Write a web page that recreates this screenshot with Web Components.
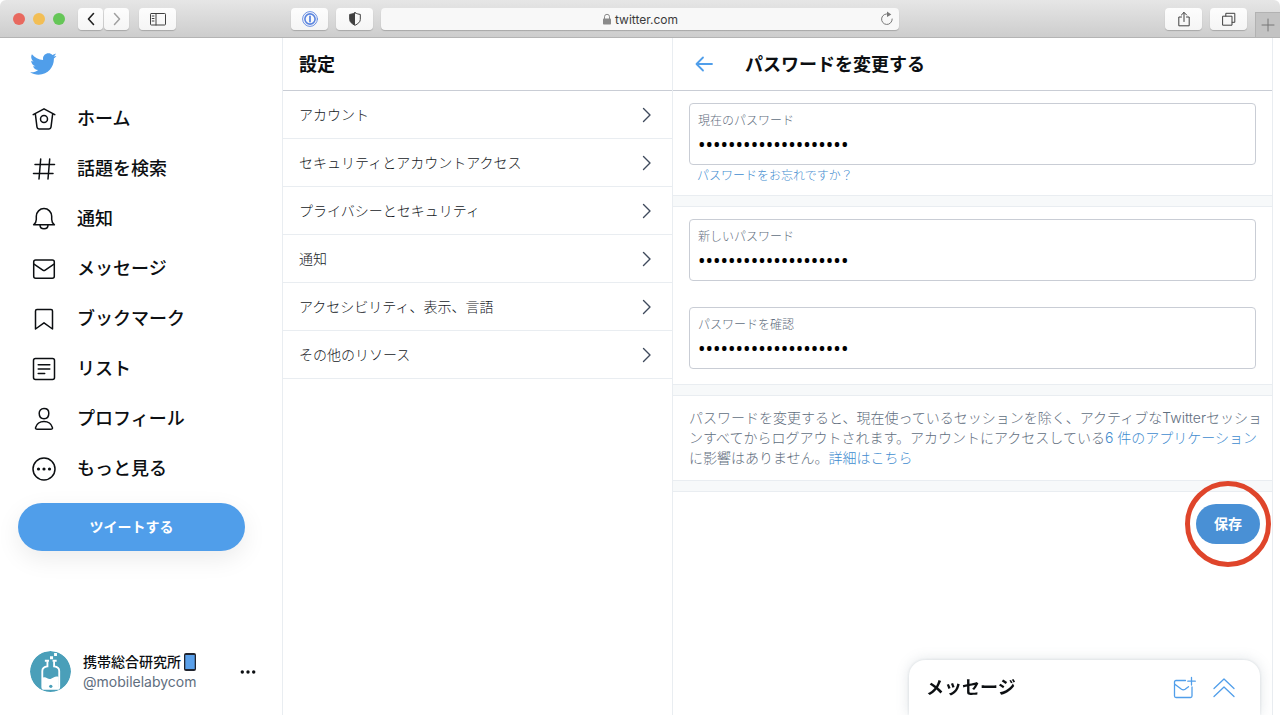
<!DOCTYPE html>
<html lang="ja">
<head>
<meta charset="utf-8">
<meta name="viewport" content="width=device-width, initial-scale=1">
<title>パスワードを変更する / Twitter</title>
<style>
  html, body { margin: 0; height: 100%; background: #fff; }
  body {
    --blue: #509eea;
    --link: #3f8ccf;
    --text: #0c0f12;
    --muted: #5f6e7e;
    --line: #e9edf1;
    --line-strong: #c9cdd5;
    color: var(--text);
    font: 14px/20px Inter, "Noto Sans CJK JP", sans-serif;
  }
</style>
</head>
<body>
<app-window>
  <browser-toolbar slot="toolbar">twitter.com</browser-toolbar>

  <side-bar slot="sidebar">
    <nav-item icon="home">ホーム</nav-item>
    <nav-item icon="hash">話題を検索</nav-item>
    <nav-item icon="bell">通知</nav-item>
    <nav-item icon="mail">メッセージ</nav-item>
    <nav-item icon="bookmark">ブックマーク</nav-item>
    <nav-item icon="list">リスト</nav-item>
    <nav-item icon="user">プロフィール</nav-item>
    <nav-item icon="more">もっと見る</nav-item>
    <pill-button slot="action" wide>ツイートする</pill-button>
    <account-chip slot="account">
      <span slot="name">携帯総合研究所</span>
      <span slot="handle">@mobilelabycom</span>
    </account-chip>
  </side-bar>

  <page-column slot="list">
    <span slot="title">設定</span>
    <settings-row>アカウント</settings-row>
    <settings-row>セキュリティとアカウントアクセス</settings-row>
    <settings-row>プライバシーとセキュリティ</settings-row>
    <settings-row>通知</settings-row>
    <settings-row>アクセシビリティ、表示、言語</settings-row>
    <settings-row>その他のリソース</settings-row>
  </page-column>

  <page-column slot="detail" back>
    <span slot="title">パスワードを変更する</span>
    <password-form></password-form>
  </page-column>

  <message-drawer slot="drawer">メッセージ</message-drawer>
</app-window>

<script>
const ICONS = {
  bird: ['0 0 24 24', '<path fill="currentColor" stroke="none" d="M23.643 4.937c-.835.37-1.732.62-2.675.733.962-.576 1.7-1.49 2.048-2.578-.9.534-1.897.922-2.958 1.13-.85-.904-2.06-1.47-3.4-1.47-2.572 0-4.658 2.086-4.658 4.66 0 .364.042.718.12 1.06-3.873-.195-7.304-2.05-9.602-4.868-.4.69-.63 1.49-.63 2.342 0 1.616.823 3.043 2.072 3.878-.764-.025-1.482-.234-2.11-.583v.06c0 2.257 1.605 4.14 3.737 4.568-.392.106-.803.162-1.227.162-.3 0-.593-.028-.877-.082.593 1.85 2.313 3.198 4.352 3.234-1.595 1.25-3.604 1.995-5.786 1.995-.376 0-.747-.022-1.112-.065 2.062 1.323 4.51 2.093 7.14 2.093 8.57 0 13.255-7.098 13.255-13.254 0-.2-.005-.402-.014-.602.91-.658 1.7-1.477 2.323-2.41z"/>'],
  home: ['0 0 24 24', '<path d="M1.2 7.6 12 1.8l10.800 5.800M3.300 6.700l1.700 13.500q.200 1.800 2 1.800h10q1.800 0 2-1.800l1.700-13.500"/><circle cx="12" cy="12" r="3.500"/>'],
  hash: ['0 0 24 24', '<path d="M8.700 2 7 22M17.700 2 16 22M3 7.500h19.500M1.500 16.500H21"/>'],
  bell: ['0 0 24 24', '<path d="M1.600 17.800c2-1.500 2.700-3 2.700-5.300V9.300a7.700 7.700 0 0 1 15.400 0v3.200c0 2.300.7 3.800 2.700 5.300zM8 18c0 5 8 5 8 0"/>'],
  mail: ['0 0 24 24', '<rect x="1.700" y="3" width="20.600" height="18.200" rx="2"/><path d="m2 7.200 8.800 5.900q1.200.8 2.400 0L22 7.200"/>'],
  bookmark: ['0 0 24 24', '<path d="M3.500 22V4q0-1.500 1.500-1.500h14q1.500 0 1.500 1.500v18L12 15.800z"/>'],
  list: ['0 0 24 24', '<rect x="1.500" y="1.500" width="21" height="21" rx="2"/><path d="M6.200 7.700h11.600M6.200 12h11.600M6.200 16.400h6.500"/>'],
  user: ['0 0 24 24', '<path d="M12 1.600c3.200 0 4.800 1.900 4.800 4.700 0 3.300-1.600 5.500-4.800 5.500s-4.800-2.200-4.800-5.500c0-2.800 1.600-4.700 4.800-4.700zM5.300 22.300q-2.200 0-1.700-1.800C4.800 16.600 7.900 14.500 12 14.500s7.200 2.100 8.400 6q.5 1.800-1.700 1.800z"/>'],
  more: ['0 0 24 24', '<circle cx="12" cy="12" r="11"/><g fill="currentColor" stroke="none"><circle cx="6.500" cy="12" r="1.600"/><circle cx="12" cy="12" r="1.600"/><circle cx="17.500" cy="12" r="1.600"/></g>'],
  dots: ['0 0 16 16', '<g fill="currentColor" stroke="none"><circle cx="2.300" cy="8" r="1.700"/><circle cx="8" cy="8" r="1.700"/><circle cx="13.700" cy="8" r="1.700"/></g>'],
  arrow: ['0 0 20 20', '<path d="M18 10H3M9 3.500 2.500 10 9 16.500"/>'],
  chevron: ['0 0 16 16', '<path d="m4.500 1.500 6.500 6.500-6.500 6.500"/>'],
  compose: ['0 0 24 24', '<path d="M13.500 4.500H4q-1.500 0-1.500 1.500v14q0 1.500 1.500 1.500h14.500q1.500 0 1.500-1.500V11M2.500 8l7 5.300q1.800 1.200 3.600 0l3.400-2.600M19.500 1.500v7.500M15.800 5.200h7.500"/>'],
  up: ['0 0 24 24', '<path d="m2 12.500 10-9.500 10 9.500M2 20.500l10-9.500L22 20.500"/>'],
  back: ['0 0 16 16', '<path d="M10.500 2.500 5.500 8l5 5.500"/>'],
  forward: ['0 0 16 16', '<path d="m5.500 2.500 5 5.500-5 5.500"/>'],
  panel: ['0 0 16 16', '<rect x=".5" y="2.500" width="15" height="11.500" rx=".8"/><path d="M6 2.500V14M2.200 5h1.800M2.200 7.500h1.800M2.200 10h1.800"/>'],
  onepass: ['0 0 16 16', '<circle cx="8" cy="8" r="7.400" stroke-width=".9"/><circle cx="8" cy="8" r="5.100" stroke-width="1.600"/><path stroke-width="1.800" d="M8 5.500v5"/>'],
  shield: ['0 0 16 16', '<path d="M8 1.800C10 2.800 11.500 3.200 13.300 3.400V8.500c0 2.500-2.300 4.300-5.300 5.800-3-1.500-5.300-3.300-5.300-5.800V3.400C4.500 3.200 6 2.800 8 1.800z"/><path fill="currentColor" stroke="none" d="M8 1.800v12.500c-3-1.500-5.300-3.300-5.300-5.800V3.400C4.500 3.200 6 2.800 8 1.800z"/>'],
  lock: ['0 0 12 12', '<path d="M3.500 6V3.800a2.500 2.500 0 0 1 5 0V6"/><rect x="2" y="5.500" width="8" height="6" rx=".8" fill="currentColor" stroke="none"/>'],
  reload: ['0 0 16 16', '<path d="M9.500 3.100A5.300 5.300 0 1 0 13.200 8"/><path fill="currentColor" stroke="none" d="M8 .5 12.300 3.400 8 6z"/>'],
  share: ['0 0 16 16', '<path d="M5.500 6H2.800v8.800h10.400V6h-2.700M8 10.500V1.500M5.400 4 8 1.400 10.600 4"/>'],
  tabs: ['0 0 16 16', '<rect x="2" y="5.200" width="9" height="9"/><path d="M4.800 5V2.300h9v9h-2.600"/>'],
  plus: ['0 0 14 14', '<path d="M7 1v12M1 7h12"/>']
};

const define = (name, html, setup) => {
  const template = document.createElement('template');
  template.innerHTML = html;
  customElements.define(name, class extends HTMLElement {
    constructor() {
      super();
      this.attachShadow({ mode: 'open' }).append(template.content.cloneNode(true));
    }
    connectedCallback() {
      if (setup) setup.call(this, this.shadowRoot);
    }
  });
};

define('ui-icon', `
  <style>
    :host { display: block; flex: none; width: var(--size, 24px); height: var(--size, 24px); }
    svg { display: block; width: 100%; height: 100%; overflow: visible; fill: none; stroke: currentColor;
          stroke-width: var(--stroke, 1.5); stroke-linecap: round; stroke-linejoin: round; }
  </style>
  <svg aria-hidden="true"></svg>`, function (root) {
  const [box, shapes] = ICONS[this.getAttribute('name')];
  const svg = root.querySelector('svg');
  svg.setAttribute('viewBox', box);
  svg.innerHTML = shapes;
});

define('app-window', `
  <style>
    :host { display: grid; grid-template-rows: auto minmax(0, 1fr); height: 100vh; overflow: hidden; }
    main { display: grid; grid-template-columns: 283fr 390fr 600fr; padding-right: 7px; min-height: 0; }
    ::slotted([slot="drawer"]) { position: fixed; right: 20px; bottom: 0; }
  </style>
  <slot name="toolbar"></slot>
  <main><slot name="sidebar"></slot><slot name="list"></slot><slot name="detail"></slot></main>
  <slot name="drawer"></slot>`);

define('browser-toolbar', `
  <style>
    :host { display: flex; align-items: center; height: 37px; border-bottom: 1px solid #b4b4b4;
            border-radius: 6px 6px 0 0; background: linear-gradient(#e6e6e6, #cdcdcd);
            font-size: 12px; line-height: 16px; color: #3c3c3c; overflow: hidden; }
    .left { display: flex; align-items: center; width: 291px; }
    .lights { display: flex; gap: 8px; margin: 0 13px; }
    .lights i { width: 12px; height: 12px; border-radius: 50%; }
    button { display: grid; place-items: center; box-sizing: border-box; width: 37px; height: 22px; padding: 0; border: 0;
             border-radius: 4px; background: linear-gradient(#fdfdfd, #f5f5f5); box-shadow: 0 1px 1px #0003; color: #404040;
             --size: 16px; --stroke: 1; }
    .history { display: flex; gap: 1px; margin-right: 10px; }
    .history button { width: 25px; }
    .middle { display: flex; flex: 1; gap: 8px; min-width: 0; }
    .address { flex: 1; display: flex; align-items: center; height: 22px; border-radius: 4px; background: #f8f8f8;
               box-shadow: 0 1px 1px #0003; padding: 0 4px; color: #777; --size: 16px; --stroke: 1; }
    .site { flex: 1; display: flex; justify-content: center; align-items: center; gap: 2px; padding-left: 15px; color: #8a8a8a; }
    .site span { color: #3c3c3c; padding-top: 2px; }
    .right { display: flex; justify-content: flex-end; width: 381px; gap: 8px; align-items: center; height: 100%; }
    .right .tab { align-self: flex-end; width: 25px; height: 25px; border-radius: 0; border: 1px solid #b2b2b2;
                  border-width: 1px 0 0 1px; background: #c3c3c3; box-shadow: none; color: #777; --size: 14px; }
  </style>
  <div class="left">
    <div class="lights"><i style="background:#e8695f"></i><i style="background:#f2be55"></i><i style="background:#65c657"></i></div>
    <div class="history">
      <button aria-label="戻る" style="--stroke:1.600;color:#222"><ui-icon name="back"></ui-icon></button>
      <button aria-label="進む" style="--stroke:1.500;color:#a0a0a0"><ui-icon name="forward"></ui-icon></button>
    </div>
    <button aria-label="サイドバー"><ui-icon name="panel"></ui-icon></button>
  </div>
  <div class="middle">
    <button aria-label="1Password" style="color:#5b85e0"><ui-icon name="onepass"></ui-icon></button>
    <button aria-label="プライバシーレポート"><ui-icon name="shield"></ui-icon></button>
    <div class="address">
      <div class="site"><ui-icon name="lock" style="--size:12px"></ui-icon><span><slot></slot></span></div>
      <ui-icon name="reload"></ui-icon>
    </div>
  </div>
  <div class="right">
    <button aria-label="共有"><ui-icon name="share"></ui-icon></button>
    <button aria-label="タブの概要"><ui-icon name="tabs"></ui-icon></button>
    <button class="tab" aria-label="新規タブ"><ui-icon name="plus"></ui-icon></button>
  </div>`);

define('side-bar', `
  <style>
    :host { display: flex; flex-direction: column; box-sizing: border-box; min-width: 0;
            border-right: 1px solid var(--line); }
    .logo { display: block; margin: 12px 0 0 29px; width: 28px; color: var(--blue); --size: 28px; }
    nav { display: flex; flex-direction: column; margin: 16px 0 9px; }
    .action { margin: 0 37px 0 18px; }
    .account { margin-top: auto; padding: 0 26px 23px 30px; }
  </style>
  <a class="logo" href="#" aria-label="Twitter"><ui-icon name="bird"></ui-icon></a>
  <nav><slot></slot></nav>
  <div class="action"><slot name="action"></slot></div>
  <div class="account"><slot name="account"></slot></div>`);

define('nav-item', `
  <style>
    :host { display: block; }
    a { display: flex; align-items: center; gap: 21px; height: 50px; padding-left: 32px; color: var(--text);
        text-decoration: none; font-size: 18px; line-height: 24px; font-weight: 500; white-space: nowrap; }
  </style>
  <a href="#"><slot></slot></a>`, function (root) {
  const icon = document.createElement('ui-icon');
  icon.setAttribute('name', this.getAttribute('icon'));
  root.querySelector('a').prepend(icon);
});

define('pill-button', `
  <style>
    :host { display: block; }
    button { display: block; height: 40px; padding: 0 18px; border: 0; border-radius: 24px; background: #4990d5;
             color: #fff; font: inherit; font-weight: 700; white-space: nowrap; }
    :host([wide]) button { width: 100%; height: 48px; background: var(--blue); box-shadow: 0 8px 24px #00000014; }
  </style>
  <button type="button"><slot></slot></button>`);

define('account-chip', `
  <style>
    :host { display: flex; align-items: center; gap: 12px; }
    .avatar { flex: none; width: 41px; height: 41px; border-radius: 50%; }
    .who { flex: 1; min-width: 0; white-space: nowrap; }
    .name { display: flex; align-items: center; gap: 3px; font-weight: 500; }
    .name svg { width: 12px; height: 18px; }
    .handle { color: var(--muted); }
    button { display: block; padding: 0; border: 0; background: none; color: var(--text); --size: 16px; }
  </style>
  <svg class="avatar" viewBox="0 0 40 40" role="img" aria-label="アイコン">
    <circle cx="20" cy="20" r="20" fill="#4a9fb9"/>
    <path d="M17 10v5q-5 .5-5 4.500V35q0 2 2 2h12.500q2 0 2-2V19.500q0-4-5-4.500v-5" fill="none" stroke="#fff" stroke-width="1.800"/>
    <path d="M14.500 9.500h4M22 9.500h4" stroke="#fff" stroke-width="2"/>
    <path d="M12.500 26c3-1.500 5 2 7.500 1.300s4.500-3.300 8-2V37H12.500z" fill="#fff"/>
    <circle cx="20.300" cy="34.500" r="1.600" fill="#4a9fb9"/>
    <path d="M19.500 5h3v3h-3zM23.500 2h2.800v2.800h-2.800z" fill="#fff"/>
  </svg>
  <div class="who">
    <div class="name"><slot name="name"></slot>
      <svg viewBox="0 0 12 18" role="img" aria-label="携帯電話"><rect width="12" height="18" rx="2" fill="#20242e"/><rect x="1.300" y="2" width="9.400" height="14" fill="#5aa0ea"/></svg>
    </div>
    <div class="handle"><slot name="handle"></slot></div>
  </div>
  <button aria-label="アカウントメニュー"><ui-icon name="dots"></ui-icon></button>`);

define('page-column', `
  <style>
    :host { display: block; box-sizing: border-box; min-width: 0; border-right: 1px solid var(--line); }
    header { display: flex; align-items: center; gap: 31px; height: 52px; padding-left: 16px;
             border-bottom: 1px solid var(--line-strong); }
    h2 { margin: 0; padding-top: 2px; font-size: 18px; line-height: 24px; font-weight: 700; white-space: nowrap; }
    a { color: var(--blue); --size: 20px; --stroke: 1.800; }
    :host([back]) header { padding-left: 21px; }
    :host(:not([back])) a { display: none; }
  </style>
  <header><a href="#" aria-label="戻る"><ui-icon name="arrow"></ui-icon></a><h2><slot name="title"></slot></h2></header>
  <slot></slot>`);

define('settings-row', `
  <style>
    :host { display: block; border-bottom: 1px solid var(--line); }
    a { display: flex; align-items: center; justify-content: space-between; height: 47px; padding: 0 17px 0 16px;
        color: #14181d; text-decoration: none; font-weight: 300; }
    ui-icon { --size: 16px; --stroke: 1.400; color: #3f4a5c; }
  </style>
  <a href="#"><slot></slot><ui-icon name="chevron"></ui-icon></a>`);

define('password-field', `
  <style>
    :host { display: block; box-sizing: border-box; height: 62px; padding: 7px 8px 0; border: 1px solid var(--line-strong);
            border-radius: 4px; }
    label { display: block; font-size: 12px; line-height: 20px; font-weight: 300; color: var(--muted); }
    input { display: block; box-sizing: border-box; width: 100%; height: 28px; padding: 0; border: 0; outline: 0;
            background: none; color: #000; font: 20px/28px "Noto Sans", sans-serif; }
  </style>
  <label for="field"><slot></slot></label>
  <input id="field" type="password" value="aaaaaaaaaaaaaaaaaaaa">`);

define('section-divider', `
  <style>
    :host { display: block; box-sizing: border-box; height: 12px; border: 1px solid var(--line); border-width: 1px 0;
            background: #f7f9fa; }
  </style>`);

define('password-form', `
  <style>
    :host { display: block; }
    section { padding: 12px 16px 9px; }
    a { color: var(--link); text-decoration: none; }
    .forgot { display: block; padding: 1px 0 0 8px; font-size: 12px; line-height: 20px; font-weight: 300; }
    .new { display: grid; gap: 26px; padding-bottom: 15px; }
    p { margin: 0; padding: 12px 4px 12px 16px; color: var(--muted); font-weight: 300; }
    .save { display: flex; justify-content: flex-end; padding: 12px; }
    .target { position: relative; }
    .ring { position: absolute; inset: -23px -11px; border: 5px solid #df452b; border-radius: 50%; pointer-events: none; }
  </style>
  <section>
    <password-field>現在のパスワード</password-field>
    <a class="forgot" href="#">パスワードをお忘れですか？</a>
  </section>
  <section-divider></section-divider>
  <section class="new">
    <password-field>新しいパスワード</password-field>
    <password-field>パスワードを確認</password-field>
  </section>
  <section-divider></section-divider>
  <p>パスワードを変更すると、現在使っているセッションを除く、アクティブなTwitterセッションすべてからログアウトされます。アカウントにアクセスしている<a href="#">6 件のアプリケーション</a>に影響はありません。<a href="#">詳細はこちら</a></p>
  <section-divider></section-divider>
  <div class="save"><div class="target"><pill-button>保存</pill-button><div class="ring"></div></div></div>`);

define('message-drawer', `
  <style>
    :host { display: flex; align-items: center; box-sizing: border-box; width: 351px; height: 55px; padding: 0 24px 0 17px;
            border-radius: 16px 16px 0 0; background: #fff; box-shadow: 0 0 14px #65778633, 0 0 3px #65778633; }
    h2 { flex: 1; margin: 0; font-size: 18px; line-height: 24px; font-weight: 700; }
    .tools { display: flex; gap: 16px; }
    button { display: block; padding: 0; border: 0; background: none; color: var(--blue); --stroke: 1.300; }
  </style>
  <h2><slot></slot></h2>
  <div class="tools">
    <button aria-label="新しいメッセージ"><ui-icon name="compose"></ui-icon></button>
    <button aria-label="開く"><ui-icon name="up"></ui-icon></button>
  </div>`);
</script>
</body>
</html>
